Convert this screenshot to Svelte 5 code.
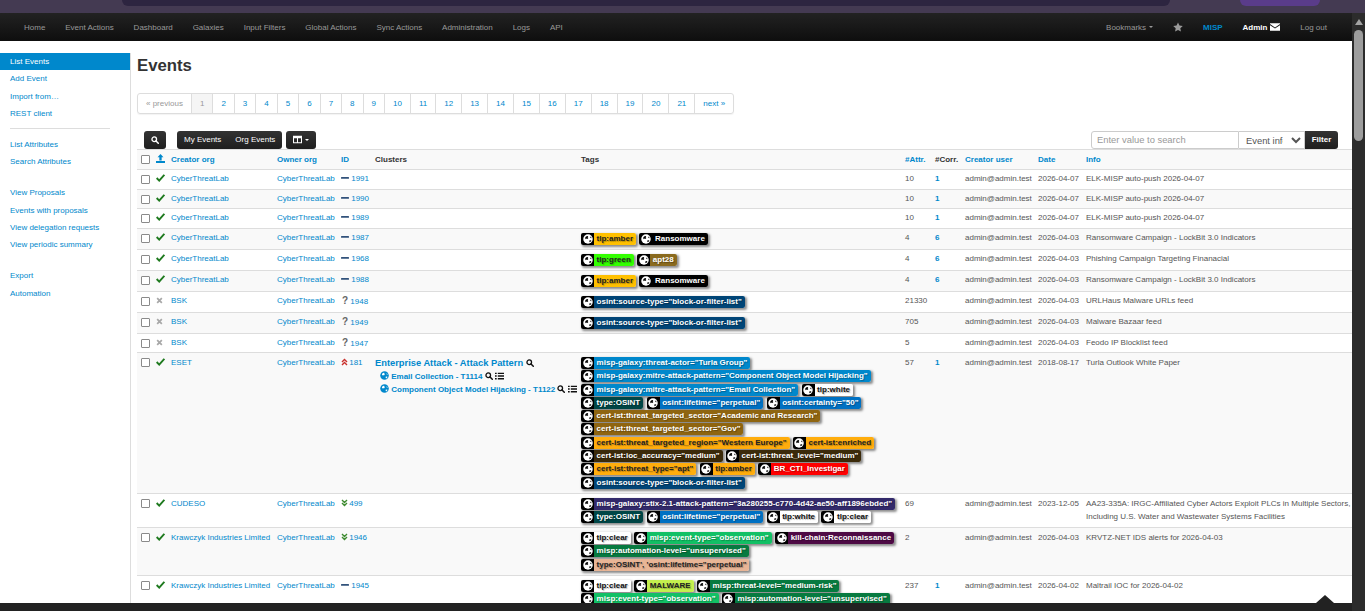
<script>
	const leftNav = ["Home", "Event Actions", "Dashboard", "Galaxies", "Input Filters", "Global Actions", "Sync Actions", "Administration", "Logs", "API"];
	const sideGroups = [
		["List Events", "Add Event", "Import from…", "REST client"],
		["List Attributes", "Search Attributes"],
		["View Proposals", "Events with proposals", "View delegation requests", "View periodic summary"],
		["Export", "Automation"]
	];
	const pages = Array.from({ length: 21 }, (_, i) => i + 1);

	const amber = ["tlp:amber", "#ffc000", "#222"];
	const ransom = ["Ransomware", "#000", "#fff"];
	const source = ['osint:source-type="block-or-filter-list"', "#004577", "#fff"];
	const white = ["tlp:white", "#fff", "#111"];
	const clear = ["tlp:clear", "#fff", "#111"];
	const osintType = ["type:OSINT", "#004646", "#fff"];
	const lifetime = ['osint:lifetime="perpetual"', "#0071c3", "#fff"];
	const auto = ['misp:automation-level="unsupervised"', "#077a40", "#fff"];
	const eventType = ['misp:event-type="observation"', "#12c065", "#fff"];

	const rows = [
		{ ok: 1, org: "CyberThreatLab", lvl: "min", id: 1991, h: 20, tags: [], attr: 10, corr: 1, date: "2026-04-07", info: "ELK-MISP auto-push 2026-04-07" },
		{ ok: 1, org: "CyberThreatLab", lvl: "min", id: 1990, h: 19, tags: [], attr: 10, corr: 1, date: "2026-04-07", info: "ELK-MISP auto-push 2026-04-07" },
		{ ok: 1, org: "CyberThreatLab", lvl: "min", id: 1989, h: 20, tags: [], attr: 10, corr: 1, date: "2026-04-07", info: "ELK-MISP auto-push 2026-04-07" },
		{ ok: 1, org: "CyberThreatLab", lvl: "min", id: 1987, h: 21, tags: [amber, ransom], attr: 4, corr: 6, date: "2026-04-03", info: "Ransomware Campaign - LockBit 3.0 Indicators" },
		{ ok: 1, org: "CyberThreatLab", lvl: "min", id: 1968, h: 21, tags: [["tlp:green", "#33ff00", "#222"], ["apt28", "#8a6a1e", "#fff"]], attr: 4, corr: 6, date: "2026-04-03", info: "Phishing Campaign Targeting Finanacial" },
		{ ok: 1, org: "CyberThreatLab", lvl: "min", id: 1988, h: 21, tags: [amber, ransom], attr: 4, corr: 6, date: "2026-04-03", info: "Ransomware Campaign - LockBit 3.0 Indicators" },
		{ ok: 0, org: "BSK", lvl: "q", id: 1948, h: 21, tags: [source], attr: 21330, date: "2026-04-03", info: "URLHaus Malware URLs feed" },
		{ ok: 0, org: "BSK", lvl: "q", id: 1949, h: 21, tags: [source], attr: 705, date: "2026-04-03", info: "Malware Bazaar feed" },
		{ ok: 0, org: "BSK", lvl: "q", id: 1947, h: 19, tags: [], attr: 5, date: "2026-04-03", info: "Feodo IP Blocklist feed" },
		{
			ok: 1, org: "ESET", lvl: "high", id: 181, h: 141, cluster: true, attr: 57, corr: 1, date: "2018-08-17", info: "Turla Outlook White Paper",
			tags: [
				['misp-galaxy:threat-actor="Turla Group"', "#0088cc", "#fff"],
				['misp-galaxy:mitre-attack-pattern="Component Object Model Hijacking"', "#0088cc", "#fff"],
				['misp-galaxy:mitre-attack-pattern="Email Collection"', "#0088cc", "#fff"],
				white,
				osintType,
				lifetime,
				['osint:certainty="50"', "#0071c3", "#fff"],
				['cert-ist:threat_targeted_sector="Academic and Research"', "#8f6510", "#fff"],
				['cert-ist:threat_targeted_sector="Gov"', "#8f6510", "#fff"],
				['cert-ist:threat_targeted_region="Western Europe"', "#ffad0d", "#222"],
				["cert-ist:enriched", "#ffad0d", "#222"],
				['cert-ist:ioc_accuracy="medium"', "#3b2a0a", "#fff"],
				['cert-ist:threat_level="medium"', "#3b2a0a", "#fff"],
				['cert-ist:threat_type="apt"', "#ffad0d", "#222"],
				["tlp:amber", "#ffad0d", "#222"],
				["BR_CTI_Investigar", "#ff0000", "#fff"],
				source
			]
		},
		{
			ok: 1, org: "CUDESO", lvl: "low", id: 499, h: 34, attr: 69, date: "2023-12-05", info: "AA23-335A: IRGC-Affiliated Cyber Actors Exploit PLCs in Multiple Sectors, Including U.S. Water and Wastewater Systems Facilities",
			tags: [['misp-galaxy:stix-2.1-attack-pattern="3a280255-c770-4d42-ae50-aff1896ebded"', "#332a6b", "#fff"], osintType, lifetime, white, clear]
		},
		{
			ok: 1, org: "Krawczyk Industries Limited", lvl: "low", id: 1946, h: 48, attr: 2, date: "2026-04-03", info: "KRVTZ-NET IDS alerts for 2026-04-03",
			tags: [clear, eventType, ["kill-chain:Reconnaissance", "#4e0a45", "#fff"], auto, ["type:OSINT', 'osint:lifetime=\"perpetual\"", "#e8b596", "#222"]]
		},
		{
			ok: 1, org: "Krawczyk Industries Limited", lvl: "min", id: 1945, h: 48, attr: 237, corr: 1, date: "2026-04-02", info: "Maltrail IOC for 2026-04-02",
			tags: [clear, ["MALWARE", "#c4f04e", "#222"], ['misp:threat-level="medium-risk"', "#077a40", "#fff"], eventType, auto]
		}
	];
</script>

{#snippet search(size = 9, color = "currentColor")}
	<svg class="ic" width={size} height={size} viewBox="0 0 16 16" fill="none" stroke={color}>
		<circle cx="6.5" cy="6.5" r="4.6" stroke-width="2.6" />
		<path d="M10 10l4.6 4.6" stroke-width="3" stroke-linecap="round" />
	</svg>
{/snippet}

{#snippet list()}
	<svg class="ic" width="9" height="8" viewBox="0 0 16 14" fill="#111">
		<path d="M0 1h3v2.4H0zM5 1h11v2.4H5zM0 5.8h3v2.4H0zM5 5.8h11v2.4H5zM0 10.6h3V13H0zM5 10.6h11V13H5z" />
	</svg>
{/snippet}

{#snippet globe(fg, land, size)}
	<svg class="ic" width={size} height={size} viewBox="0 0 16 16">
		<circle cx="8" cy="8" r="7.6" fill={fg} />
		<path d="M4 4.6l2.4-1.6 2 .5-1 1.5 1.2 1.4-1.6 1.6-1.6-.9-.8 1.1-1.2-1.4zM10 10.4l2.4-.6 1 1-2.2 2.4-1-.8zM11.4 4l1.8 1.2.4 1.6-1.6-.5z" fill={land} />
	</svg>
{/snippet}

{#snippet level(kind)}
	{#if kind === "min"}
		<svg class="ic" width="8" height="8" viewBox="0 0 14 12" fill="#31527b"><rect x="0" y="4.4" width="14" height="3" rx="1" /></svg>
	{:else if kind === "q"}
		<b class="qmark">?</b>
	{:else if kind === "high"}
		<svg class="ic tight" width="7" height="8" viewBox="0 0 14 14" fill="none" stroke="#c9302c" stroke-width="2.8"><path d="M2 7l5-5 5 5M2 13l5-5 5 5" /></svg>
	{:else}
		<svg class="ic tight" width="7" height="8" viewBox="0 0 14 14" fill="none" stroke="#3c8a2e" stroke-width="2.8"><path d="M2 1l5 5 5-5M2 7l5 5 5-5" /></svg>
	{/if}
{/snippet}

<div class="app">
	<div class="strip">
		<div class="urlbar"></div>
		<div class="blob"></div>
	</div>
	<div class="body">
		<div class="page">
			<nav class="topnav">
				{#each leftNav as item}<span>{item}</span>{/each}
				<span class="spacer"></span>
				<span class="bookmarks">Bookmarks <i class="caret"></i></span>
				<svg class="star" width="10" height="10" viewBox="0 0 16 16" fill="#9a9a9a"><path d="M8 .6l2.3 4.9 5.3.7-3.9 3.7 1 5.3L8 12.6l-4.7 2.6 1-5.3L.4 6.2l5.3-.7z" /></svg>
				<b class="misp">MISP</b>
				<b class="admin">Admin</b>
				<svg class="mail" width="10" height="8" viewBox="0 0 16 12" fill="#fff"><path d="M0 1.2V0h16v1.2L8 6.6zM0 3l8 5.4L16 3v9H0z" /></svg>
				<span class="logout">Log out</span>
			</nav>
			<div class="main">
				<aside class="side">
					{#each sideGroups as group, g}
						<ul class="group g{g}">
							{#each group as link, i}
								<li class:active={g === 0 && i === 0}>{link}</li>
							{/each}
						</ul>
					{/each}
				</aside>
				<section class="content">
					<h2>Events</h2>
					<div class="pager">
						<span class="muted">« previous</span>
						{#each pages as p}
							<span class:current={p === 1}>{p}</span>
						{/each}
						<span>next »</span>
					</div>
					<div class="toolbar">
						<button class="btn first">{@render search(10, "#fff")}</button>
						<div class="btngroup">
							<button class="btn">My Events</button>
							<button class="btn">Org Events</button>
						</div>
						<button class="btn cols">
							<svg width="10" height="9" viewBox="0 0 14 12" fill="#fff"><path d="M0 0h14v12H0zM1.6 4v6.4h4.6V4zm6.2 0v6.4h4.6V4z" fill-rule="evenodd" /></svg>
							<i class="caret small"></i>
						</button>
						<span class="spacer"></span>
						<input class="search" placeholder="Enter value to search" />
						<select class="field"><option>Event info</option></select>
						<button class="btn filter">Filter</button>
					</div>
					<table>
						<colgroup>
							<col style="width:15px" /><col style="width:15px" /><col style="width:106px" /><col style="width:64px" /><col style="width:34px" /><col style="width:206px" /><col style="width:324px" /><col style="width:30px" /><col style="width:30px" /><col style="width:73px" /><col style="width:48px" /><col style="width:275px" />
						</colgroup>
						<thead>
							<tr>
								<th><input type="checkbox" /></th>
								<th>
									<svg class="ic" width="9" height="9" viewBox="0 0 14 14" fill="#0088cc"><path d="M7 0l4.6 5H8.8v5H5.2V5H2.4zM0 11h14v3H0z" /></svg>
								</th>
								<th class="link">Creator org</th>
								<th class="link">Owner org</th>
								<th class="link">ID</th>
								<th>Clusters</th>
								<th>Tags</th>
								<th class="link">#Attr.</th>
								<th>#Corr.</th>
								<th class="link">Creator user</th>
								<th class="link">Date</th>
								<th class="link">Info</th>
							</tr>
						</thead>
						<tbody>
							{#each rows as r}
								<tr class:short={r.h <= 21} style="height:{r.h}px">
									<td><input type="checkbox" /></td>
									<td>
										{#if r.ok}
											<svg class="ic" width="9" height="8" viewBox="0 0 14 12" fill="none" stroke="#1f7a1f" stroke-width="3"><path d="M1 6l4 4 8-9" /></svg>
										{:else}
											<svg class="ic" width="7" height="7" viewBox="0 0 12 12" fill="none" stroke="#a8a8a8" stroke-width="3"><path d="M2 2l8 8M10 2l-8 8" /></svg>
										{/if}
									</td>
									<td class="link">{r.org}</td>
									<td class="link">CyberThreatLab</td>
									<td class="link">{@render level(r.lvl)} {r.id}</td>
									<td>
										{#if r.cluster}
											<div class="cl-head">Enterprise Attack - Attack Pattern {@render search(8, "#111")}</div>
											<div class="cl-item">{@render globe("#0088cc", "#fff", 9)} Email Collection - T1114 {@render search(8, "#111")} {@render list()}</div>
											<div class="cl-item">{@render globe("#0088cc", "#fff", 9)} Component Object Model Hijacking - T1122 {@render search(8, "#111")} {@render list()}</div>
										{/if}
									</td>
									<td class="tagcell">
										<div class="tags">
											{#each r.tags as [label, bg, fg]}
												<span class="tag">
													<span class="globe">{@render globe("#fff", "#000", 10)}</span>
													<span class="label" style="background:{bg};color:{fg}">{label}</span>
												</span>
											{/each}
										</div>
									</td>
									<td>{r.attr}</td>
									<td class="link strong">{r.corr ?? ""}</td>
									<td>admin@admin.test</td>
									<td>{r.date}</td>
									<td class="info">{r.info}</td>
								</tr>
							{/each}
						</tbody>
					</table>
				</section>
			</div>
			<footer class="foot"><i class="tri"></i></footer>
		</div>
		<div class="scroll">
			<i class="arrow"></i>
			<div class="thumb"></div>
		</div>
	</div>
</div>

<style>
	:global(body) {
		margin: 0;
		overflow: hidden;
	}
	.app {
		height: 611px;
		display: flex;
		flex-direction: column;
		font-family: "Liberation Sans", Arial, sans-serif;
		font-size: 8px;
		line-height: 13px;
		color: #555;
	}
	.strip {
		height: 13px;
		flex: none;
		background: #443a52;
		display: flex;
		align-items: flex-start;
	}
	.urlbar {
		margin-left: 122px;
		width: 1048px;
		height: 6px;
		background: #2d2540;
		border-radius: 0 0 10px 10px;
	}
	.blob {
		margin-left: 70px;
		width: 80px;
		height: 6px;
		background: #5a3c8a;
		border-radius: 0 0 16px 16px;
	}
	.body {
		flex: 1;
		min-height: 0;
		display: flex;
	}
	.page {
		flex: 1;
		min-width: 0;
		display: flex;
		flex-direction: column;
	}
	.topnav {
		height: 28px;
		flex: none;
		box-sizing: border-box;
		padding: 0 25px 0 24px;
		display: flex;
		align-items: center;
		gap: 19.9px;
		background: linear-gradient(#222, #0e0e0e);
		color: #999;
	}
	.spacer {
		flex: 1;
	}
	.caret {
		display: inline-block;
		border: 2.7px solid transparent;
		border-top-color: #999;
		border-bottom: 0;
		vertical-align: middle;
		margin-left: 1px;
	}
	.caret.small {
		border-top-color: #fff;
	}
	.misp {
		color: #0088cc;
	}
	.admin {
		color: #fff;
	}
	.mail {
		margin-left: -16.9px;
	}
	.main {
		flex: 1;
		min-height: 0;
		display: flex;
		overflow: hidden;
		background: #fff;
	}
	.side {
		width: 131px;
		flex: none;
		box-sizing: border-box;
		margin-top: 12px;
		border-right: 1px solid #ddd;
		color: #0088cc;
	}
	.group {
		list-style: none;
		margin: 0;
		padding: 0;
	}
	.group li {
		height: 17.4px;
		line-height: 17px;
		padding-left: 10px;
	}
	.group li.active {
		background: #0088cc;
		color: #fff;
	}
	.g0::after {
		content: "";
		display: block;
		margin: 5.5px 20px 7px 10px;
		border-bottom: 1px solid #ddd;
	}
	.g1,
	.g2 {
		padding-bottom: 13.4px;
	}
	.content {
		flex: 1;
		min-width: 0;
		padding-left: 6px;
		overflow: hidden;
	}
	h2 {
		margin: 0;
		padding-top: 14px;
		height: 36px;
		font-size: 16.75px;
		line-height: 22px;
		color: #333;
	}
	.pager {
		display: inline-flex;
		height: 21px;
		box-sizing: border-box;
		border: 1px solid #ddd;
		border-radius: 3px;
		line-height: 19px;
		color: #0088cc;
		margin-top: 2px;
		box-shadow: 0 1px 1px rgba(0, 0, 0, 0.05);
		vertical-align: top;
	}
	.pager span {
		padding: 0 8px;
		border-left: 1px solid #ddd;
	}
	.pager span:first-child {
		border-left: 0;
	}
	.pager .muted {
		color: #999;
	}
	.pager .current {
		background: #f5f5f5;
		color: #999;
	}
	.toolbar {
		display: flex;
		margin-top: 17px;
		height: 18px;
		padding-right: 14px;
	}
	.btn {
		border: 0;
		padding: 0 7px 1px;
		height: 18px;
		background: linear-gradient(#333, #1e1e1e);
		color: #fff;
		font: inherit;
		border-radius: 3px;
		display: inline-flex;
		align-items: center;
		gap: 2px;
	}
	.first {
		margin-left: 7px;
		width: 22px;
		justify-content: center;
	}
	.btngroup {
		display: flex;
		margin-left: 11px;
		border-radius: 3px;
		overflow: hidden;
	}
	.btngroup .btn {
		border-radius: 0;
	}
	.cols {
		margin-left: 4px;
		width: 30px;
		justify-content: center;
	}
	.search {
		box-sizing: border-box;
		width: 148px;
		height: 18px;
		padding: 0 5px 2px;
		border: 1px solid #ccc;
		border-radius: 3px 0 0 3px;
		font: 9.4px "Liberation Sans", Arial, sans-serif;
		outline: none;
	}
	.search::placeholder {
		color: #999;
	}
	.field {
		box-sizing: border-box;
		width: 66px;
		height: 18px;
		padding: 0 5px 0 3px;
		border: 1px solid #ccc;
		border-left: 0;
		background: #fff;
		color: #555;
		font: 9.4px "Liberation Sans", Arial, sans-serif;
	}
	.filter {
		border-radius: 0 3px 3px 0;
		font-weight: bold;
		width: 33px;
		padding: 0 6px 1px;
		justify-content: center;
	}
	table {
		border-collapse: collapse;
		table-layout: fixed;
		width: 1220px;
	}
	th,
	td {
		box-sizing: border-box;
		padding: 2.5px 4px 0;
		text-align: left;
		vertical-align: top;
		border-top: 1px solid #ddd;
		font-weight: normal;
	}
	th {
		height: 20px;
		font-weight: bold;
		color: #333;
		background: #f9f9f9;
		border-bottom: 1px solid #ddd;
	}
	th.link {
		color: #0088cc;
	}
	th:first-child,
	td:first-child {
		padding-right: 0;
	}
	tr.short td {
		padding-top: 1.5px;
	}
	tbody tr:nth-child(even) td {
		background: #f9f9f9;
	}
	td.link {
		color: #0088cc;
	}
	td.strong {
		font-weight: bold;
	}
	td {
		white-space: nowrap;
	}
	td.info,
	td.tagcell {
		white-space: normal;
	}
	input[type="checkbox"] {
		appearance: none;
		box-sizing: border-box;
		margin: 0;
		width: 9px;
		height: 9px;
		background: #fff;
		border: 1px solid #8a8a8a;
		border-radius: 1px;
		vertical-align: -2px;
	}
	tr.short input[type="checkbox"] {
		vertical-align: -3px;
	}
	.ic {
		display: inline-block;
		vertical-align: -1px;
	}
	.tight {
		margin-right: -1px;
	}
	.qmark {
		color: #666;
		font-size: 10px;
		padding-left: 1px;
	}
	.cl-head {
		font-size: 9.33px;
		font-weight: bold;
		color: #0088cc;
		line-height: 14px;
	}
	.cl-item {
		font-weight: bold;
		color: #0088cc;
		padding-left: 5px;
		line-height: 13.3px;
	}
	td.tagcell,
	tr.short td.tagcell {
		padding: 4px 4px 0 4px;
	}
	.tags {
		display: flex;
		flex-wrap: wrap;
		gap: 1.3px 3.4px;
	}
	.tag {
		display: inline-flex;
		height: 12px;
		border-radius: 2px;
		box-shadow: 1.5px 1.5px 2.5px rgba(0, 0, 0, 0.45);
		font-weight: bold;
		line-height: 12px;
		white-space: nowrap;
		overflow: hidden;
	}
	.globe {
		width: 13px;
		background: #000;
		display: flex;
		align-items: center;
		justify-content: center;
	}
	.label {
		padding: 0 3px 0 2.6px;
		text-shadow: 1px 1px 1px rgba(0, 0, 0, 0.3);
	}
	.foot {
		height: 8px;
		flex: none;
		background: #222;
		position: relative;
	}
	.tri {
		position: absolute;
		left: 1316px;
		top: -8px;
		border: 9px solid transparent;
		border-top: 0;
		border-bottom: 8px solid #222;
	}
	.scroll {
		width: 13px;
		flex: none;
		background: #2c2c2c;
		display: flex;
		flex-direction: column;
		align-items: center;
	}
	.arrow {
		margin-top: 6px;
		border: 4.5px solid transparent;
		border-top: 0;
		border-bottom: 6px solid #a3a3a3;
	}
	.thumb {
		width: 9px;
		height: 111px;
		margin-top: 5px;
		background: #9d9d9d;
		border-radius: 5px;
	}
</style>
